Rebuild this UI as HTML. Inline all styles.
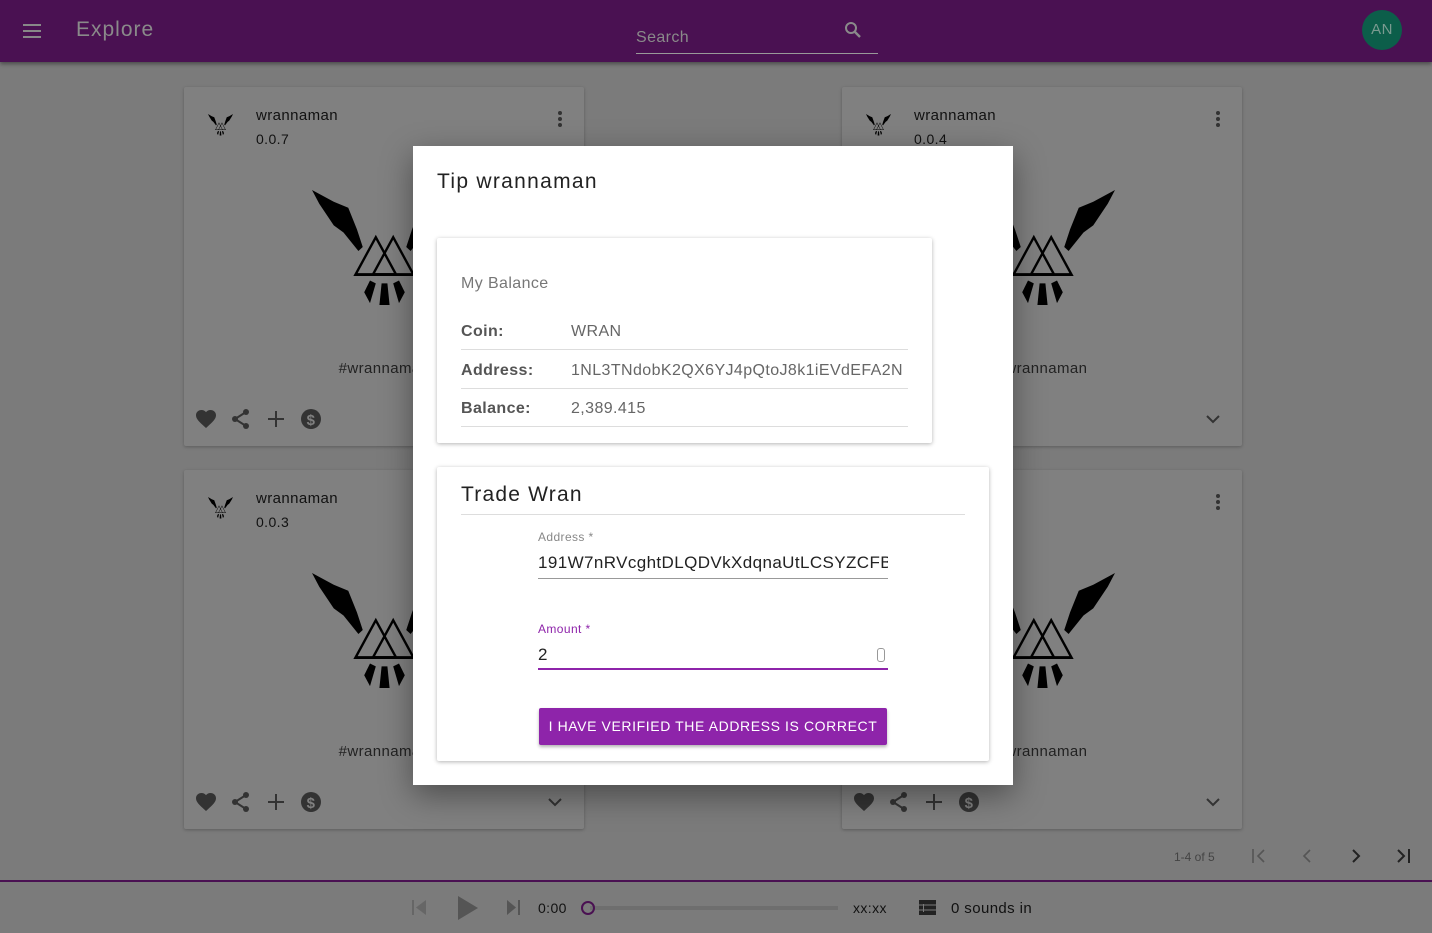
<!DOCTYPE html>
<html><head><style>
*{box-sizing:border-box;margin:0;padding:0}
body{width:1432px;height:933px;overflow:hidden;background:#7b7b7b;font-family:"Liberation Sans",sans-serif;position:relative;color:#222;letter-spacing:0.4px}
.top{position:absolute;left:0;top:0;width:1432px;height:62px;background:#4a1152;box-shadow:0 2px 4px rgba(0,0,0,.4)}
.card{position:absolute;width:400px;height:359px;background:#808080;border-radius:2px;box-shadow:0 1px 3px rgba(0,0,0,.25)}
.card .t{position:absolute;left:72px;top:20px;font-size:15px;color:#111}
.card .v{position:absolute;left:72px;top:44px;font-size:14px;color:#111}
.card .tag{position:absolute;left:0;width:400px;top:273px;text-align:center;font-size:15px;color:#222}
.dots{position:absolute;right:22px;top:24px;width:4px}
.dots i{display:block;width:4px;height:4px;border-radius:2px;background:#333;margin-bottom:2px}
.icons{position:absolute;left:12px;top:322px}
.modal{position:absolute;left:413px;top:146px;width:600px;height:639px;background:#fff;box-shadow:0 10px 30px rgba(0,0,0,.4)}
.pane{position:absolute;background:#fff;box-shadow:0 1px 4px rgba(0,0,0,.3);border-radius:2px}
.row{position:absolute;left:24px;width:447px;border-bottom:1px solid #ddd;height:38px;font-size:16px;color:#666}
.row b{position:absolute;left:0;top:11px;color:#555}
.row span{position:absolute;left:110px;top:11px;white-space:nowrap}
</style></head><body>
<div class="top">
<div style="position:absolute;left:23px;top:24px;width:18px"><div style="height:2px;background:#888;margin-bottom:4px"></div><div style="height:2px;background:#888;margin-bottom:4px"></div><div style="height:2px;background:#888"></div></div>
<div style="position:absolute;left:76px;top:18px;font-size:21px;color:#8a8a8a;letter-spacing:1px">Explore</div>
<div style="position:absolute;left:636px;top:29px;font-size:16px;color:#8a8a8a">Search</div>
<div style="position:absolute;left:636px;top:53px;width:242px;height:1px;background:#999"></div>
<svg style="position:absolute;left:844px;top:21px" width="18" height="18" viewBox="0 0 18 18"><circle cx="7" cy="7" r="5" fill="none" stroke="#8a8a8a" stroke-width="2"/><path d="M11 11l5 5" stroke="#8a8a8a" stroke-width="2.4"/></svg>
<div style="position:absolute;left:1362px;top:10px;width:40px;height:40px;border-radius:50%;background:#0c5e4a;color:#7a9a90;font-size:15px;text-align:center;line-height:40px">AN</div>
</div>

<svg width="0" height="0" style="position:absolute"><defs>
<g id="eagle">
<polygon points="0,0 30,12 50,18 62,40 70,58 64,62 40,40 20,22 40,32 56,50 30,36 10,14" fill="#000"/>
<polygon points="200,0 170,12 150,18 138,40 130,58 136,62 160,40 180,22 160,32 144,50 170,36 190,14" fill="#000"/>
<polygon points="88,48 60,86 116,86" fill="none" stroke="#000" stroke-width="3"/>
<polygon points="112,48 84,86 140,86" fill="none" stroke="#000" stroke-width="3"/>
<polygon points="96,95 104,95 107,117 93,117" fill="#000"/>
<polygon points="80,92 88,95 80,115 72,104" fill="#000"/>
<polygon points="120,92 112,95 120,115 128,104" fill="#000"/>
</g>
<g id="ic" fill="#333">
<path d="M10 19l-1.4-1.3C3.4 13.1 0 10 0 6.3 0 3.2 2.4 1 5.5 1c1.7 0 3.4.8 4.5 2.1C11.1 1.8 12.8 1 14.5 1 17.6 1 20 3.2 20 6.3c0 3.7-3.4 6.8-8.6 11.4z"/>
<g transform="translate(35,0)"><circle cx="15" cy="3" r="3"/><circle cx="4" cy="10" r="3"/><circle cx="15" cy="17" r="3"/><path d="M15 3L4 10l11 7" stroke="#333" stroke-width="2" fill="none"/></g>
<path d="M79 2h2v7h7v2h-7v7h-2v-7h-7v-2h7z"/>
<circle cx="115" cy="10" r="10"/><text x="115" y="16" font-size="15" fill="#808080" text-anchor="middle" font-family="Liberation Sans" font-weight="bold">$</text>
</g>
</defs></svg>

<div class="card" style="left:184px;top:87px">
<svg style="position:absolute;left:24px;top:27px" width="25" height="22" viewBox="0 0 200 120" preserveAspectRatio="none"><use href="#eagle"/></svg>
<div class="t">wrannaman</div><div class="v">0.0.7</div><div class="dots"><i></i><i></i><i></i></div>
<svg style="position:absolute;left:128px;top:103px" width="145" height="118" viewBox="0 0 200 120" preserveAspectRatio="none"><use href="#eagle"/></svg>
<div class="tag">#wrannaman</div>
<svg class="icons" width="140" height="22"><use href="#ic"/></svg>
</div>
<div class="card" style="left:842px;top:87px">
<svg style="position:absolute;left:24px;top:27px" width="25" height="22" viewBox="0 0 200 120" preserveAspectRatio="none"><use href="#eagle"/></svg>
<div class="t">wrannaman</div><div class="v">0.0.4</div><div class="dots"><i></i><i></i><i></i></div>
<svg style="position:absolute;left:128px;top:103px" width="145" height="118" viewBox="0 0 200 120" preserveAspectRatio="none"><use href="#eagle"/></svg>
<div class="tag">#wrannaman</div>
<svg style="position:absolute;right:22px;top:328px" width="14" height="9"><path d="M1 1l6 6 6-6" stroke="#333" stroke-width="2" fill="none"/></svg>
</div>
<div class="card" style="left:184px;top:470px">
<svg style="position:absolute;left:24px;top:27px" width="25" height="22" viewBox="0 0 200 120" preserveAspectRatio="none"><use href="#eagle"/></svg>
<div class="t">wrannaman</div><div class="v">0.0.3</div><div class="dots"><i></i><i></i><i></i></div>
<svg style="position:absolute;left:128px;top:103px" width="145" height="118" viewBox="0 0 200 120" preserveAspectRatio="none"><use href="#eagle"/></svg>
<div class="tag">#wrannaman</div>
<svg class="icons" width="140" height="22"><use href="#ic"/></svg>
<svg style="position:absolute;right:22px;top:328px" width="14" height="9"><path d="M1 1l6 6 6-6" stroke="#333" stroke-width="2" fill="none"/></svg>
</div>
<div class="card" style="left:842px;top:470px">
<div class="dots"><i></i><i></i><i></i></div>
<svg style="position:absolute;left:128px;top:103px" width="145" height="118" viewBox="0 0 200 120" preserveAspectRatio="none"><use href="#eagle"/></svg>
<div class="tag">#wrannaman</div>
<svg class="icons" width="140" height="22"><use href="#ic"/></svg>
<svg style="position:absolute;right:22px;top:328px" width="14" height="9"><path d="M1 1l6 6 6-6" stroke="#333" stroke-width="2" fill="none"/></svg>
</div>

<div style="position:absolute;left:1174px;top:850px;font-size:12px;color:#444;letter-spacing:0">1-4 of 5</div>
<svg style="position:absolute;left:1252px;top:849px" width="16" height="14"><path d="M1 0v14M12 1L6 7l6 6" stroke="#555" stroke-width="1.6" fill="none"/></svg>
<svg style="position:absolute;left:1302px;top:849px" width="10" height="14"><path d="M8 1L2 7l6 6" stroke="#555" stroke-width="1.6" fill="none"/></svg>
<svg style="position:absolute;left:1351px;top:849px" width="10" height="14"><path d="M2 1l6 6-6 6" stroke="#222" stroke-width="2" fill="none"/></svg>
<svg style="position:absolute;left:1396px;top:849px" width="16" height="14"><path d="M2 1l6 6-6 6M13 0v14" stroke="#222" stroke-width="2" fill="none"/></svg>

<div style="position:absolute;left:0;top:880px;width:1432px;height:2px;background:#4a1152"></div>
<div style="position:absolute;left:412px;top:900px;width:2px;height:15px;background:#666"></div>
<svg style="position:absolute;left:414px;top:900px" width="12" height="15"><path d="M12 0v15L2 7.5z" fill="#666"/></svg>
<svg style="position:absolute;left:458px;top:896px" width="20" height="24"><path d="M0 0v24l20-12z" fill="#555"/></svg>
<svg style="position:absolute;left:507px;top:900px" width="14" height="15"><path d="M0 0v15l9-7.5z" fill="#555"/><rect x="11" y="0" width="2" height="15" fill="#555"/></svg>
<div style="position:absolute;left:538px;top:900px;font-size:14px;color:#111">0:00</div>
<div style="position:absolute;left:590px;top:906px;width:248px;height:4px;background:#6e6e6e"></div>
<div style="position:absolute;left:581px;top:901px;width:14px;height:14px;border:2px solid #4a1152;border-radius:50%"></div>
<div style="position:absolute;left:853px;top:900px;font-size:14px;color:#111">xx:xx</div>
<svg style="position:absolute;left:919px;top:900px" width="17" height="15" fill="#222"><rect x="0" y="0" width="17" height="15"/><rect x="4" y="4" width="1" height="8" fill="#7b7b7b"/><rect x="0" y="4.5" width="17" height="1" fill="#7b7b7b"/><rect x="0" y="9.5" width="17" height="1" fill="#7b7b7b"/></svg>
<div style="position:absolute;left:951px;top:900px;font-size:15px;color:#111">0 sounds in</div>

<div class="modal">
<div style="position:absolute;left:24px;top:24px;font-size:21px;color:#222;letter-spacing:1.3px">Tip wrannaman</div>
<div class="pane" style="left:24px;top:92px;width:495px;height:205px">
<div style="position:absolute;left:24px;top:37px;font-size:16px;color:#777">My Balance</div>
<div class="row" style="top:74px"><b>Coin:</b><span>WRAN</span></div>
<div class="row" style="top:113px"><b>Address:</b><span>1NL3TNdobK2QX6YJ4pQtoJ8k1iEVdEFA2N</span></div>
<div class="row" style="top:151px"><b>Balance:</b><span>2,389.415</span></div>
</div>
<div class="pane" style="left:24px;top:321px;width:552px;height:294px">
<div style="position:absolute;left:24px;top:16px;font-size:21px;color:#222;letter-spacing:1.2px">Trade Wran</div>
<div style="position:absolute;left:24px;top:47px;width:504px;height:1px;background:#ddd"></div>
<div style="position:absolute;left:101px;top:63px;font-size:12px;color:#888">Address *</div>
<div style="position:absolute;left:101px;top:86px;width:350px;font-size:17px;color:#222;overflow:hidden;white-space:nowrap">191W7nRVcghtDLQDVkXdqnaUtLCSYZCFB6</div>
<div style="position:absolute;left:101px;top:111px;width:350px;height:1px;background:#999"></div>
<div style="position:absolute;left:101px;top:155px;font-size:12px;color:#8e24aa">Amount *</div>
<div style="position:absolute;left:101px;top:178px;font-size:17px;color:#222">2</div>
<div style="position:absolute;left:440px;top:181px;width:8px;height:14px;border:1px solid #999;border-radius:3px"></div>
<div style="position:absolute;left:101px;top:201px;width:350px;height:2px;background:#8e24aa"></div>
<div style="position:absolute;left:102px;top:241px;width:348px;height:37px;background:#8e24aa;color:#fff;font-size:14px;text-align:center;line-height:37px;border-radius:2px;box-shadow:0 2px 3px rgba(0,0,0,.3);letter-spacing:0.6px">I HAVE VERIFIED THE ADDRESS IS CORRECT</div>
</div>
</div>
</body></html>
